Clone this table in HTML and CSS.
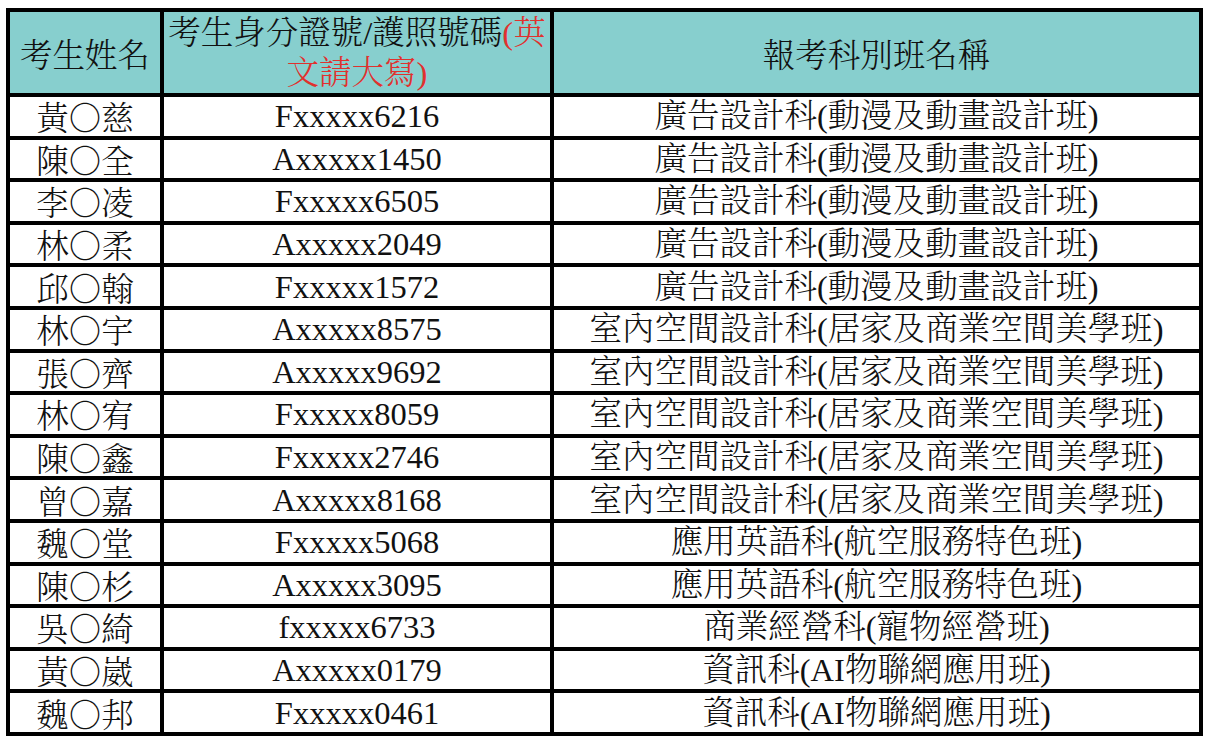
FILE: index.html
```html
<!DOCTYPE html>
<html lang="zh-Hant">
<head>
<meta charset="utf-8">
<title>報考名單</title>
<link rel="stylesheet" href="styles.css">
</head>
<body>
<table class="roster">
  <colgroup>
    <col class="c-name">
    <col class="c-id">
    <col class="c-dept">
  </colgroup>
  <thead>
    <tr>
      <th class="h-name">考生姓名</th>
      <th class="h-id">考生身分證號/護照號碼<span class="red">(英<br>文請大寫)</span></th>
      <th class="h-dept">報考科別班名稱</th>
    </tr>
  </thead>
  <tbody>
    <tr><td class="name">黃○慈</td><td class="id">Fxxxxx6216</td><td class="dept">廣告設計科(動漫及動畫設計班)</td></tr>
    <tr><td class="name">陳○全</td><td class="id">Axxxxx1450</td><td class="dept">廣告設計科(動漫及動畫設計班)</td></tr>
    <tr><td class="name">李○凌</td><td class="id">Fxxxxx6505</td><td class="dept">廣告設計科(動漫及動畫設計班)</td></tr>
    <tr><td class="name">林○柔</td><td class="id">Axxxxx2049</td><td class="dept">廣告設計科(動漫及動畫設計班)</td></tr>
    <tr><td class="name">邱○翰</td><td class="id">Fxxxxx1572</td><td class="dept">廣告設計科(動漫及動畫設計班)</td></tr>
    <tr><td class="name">林○宇</td><td class="id">Axxxxx8575</td><td class="dept">室內空間設計科(居家及商業空間美學班)</td></tr>
    <tr><td class="name">張○齊</td><td class="id">Axxxxx9692</td><td class="dept">室內空間設計科(居家及商業空間美學班)</td></tr>
    <tr><td class="name">林○宥</td><td class="id">Fxxxxx8059</td><td class="dept">室內空間設計科(居家及商業空間美學班)</td></tr>
    <tr><td class="name">陳○鑫</td><td class="id">Fxxxxx2746</td><td class="dept">室內空間設計科(居家及商業空間美學班)</td></tr>
    <tr><td class="name">曾○嘉</td><td class="id">Axxxxx8168</td><td class="dept">室內空間設計科(居家及商業空間美學班)</td></tr>
    <tr><td class="name">魏○堂</td><td class="id">Fxxxxx5068</td><td class="dept">應用英語科(航空服務特色班)</td></tr>
    <tr><td class="name">陳○杉</td><td class="id">Axxxxx3095</td><td class="dept">應用英語科(航空服務特色班)</td></tr>
    <tr><td class="name">吳○綺</td><td class="id">fxxxxx6733</td><td class="dept">商業經營科(寵物經營班)</td></tr>
    <tr><td class="name">黃○崴</td><td class="id">Axxxxx0179</td><td class="dept">資訊科(AI物聯網應用班)</td></tr>
    <tr><td class="name">魏○邦</td><td class="id">Fxxxxx0461</td><td class="dept">資訊科(AI物聯網應用班)</td></tr>
  </tbody>
</table>
</body>
</html>
```
FILE: styles.css
```css
html, body {
  margin: 0;
  padding: 0;
  background: #ffffff;
}

body {
  padding: 8px 0 0 6px;
  color: #111111;
  font-family: "Liberation Serif", "Noto Serif CJK TC", "Noto Sans CJK TC", serif;
  font-size: 32.5px;
  font-weight: 300;
}

.roster {
  border-spacing: 0;
  border-top: 4px solid #000;
  border-left: 4px solid #000;
  table-layout: fixed;
  width: 1197px;
}

.c-name { width: 154px; }
.c-id { width: 390px; }
.c-dept { width: 649px; }

.roster th,
.roster td {
  border-right: 4px solid #000;
  border-bottom: 4px solid #000;
  padding: 0;
  text-align: center;
  vertical-align: middle;
  font-weight: 300;
  white-space: nowrap;
}

.roster thead th {
  background: #87cfce;
  height: 81px;
  box-sizing: content-box;
  font-family: "Noto Serif CJK TC", "Noto Sans CJK TC", serif;
  line-height: 40px;
}

.roster thead .h-id {
  font-family: "Liberation Serif", "Noto Serif CJK TC", "Noto Sans CJK TC", serif;
  white-space: normal;
}

.red {
  color: #e0312e;
}

.roster tbody td {
  height: 38.6px;
  box-sizing: content-box;
  line-height: 38px;
}

.roster td.name {
  font-family: "Noto Serif CJK TC", "Noto Sans CJK TC", serif;
}
```
